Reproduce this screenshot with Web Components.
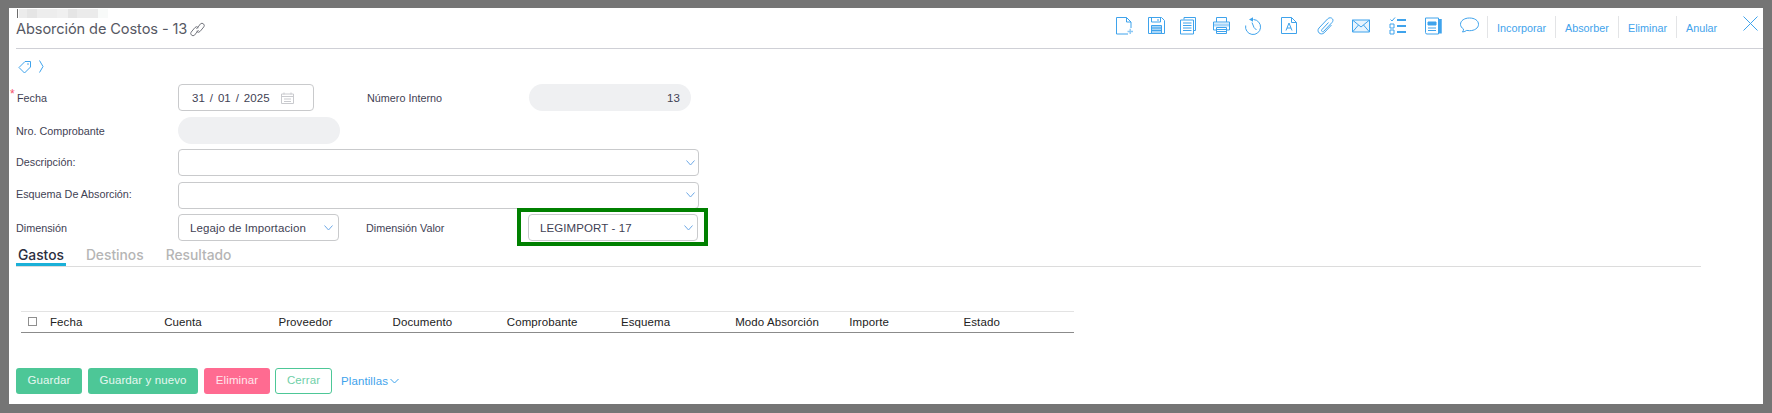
<!DOCTYPE html>
<html lang="es">
<head>
<meta charset="utf-8">
<title>Absorción de Costos</title>
<style>
  html,body{margin:0;padding:0;height:100%;background:#757575;overflow:hidden;}
  body{font-family:"Liberation Sans",Arial,sans-serif;}
</style>
</head>
<body>
<absorcion-panel>
  <panel-header slot="header"></panel-header>
  <tag-bar slot="tags"></tag-bar>
  <absorcion-form slot="form"></absorcion-form>
  <tab-bar slot="tabs"></tab-bar>
  <gastos-table slot="table"></gastos-table>
  <action-bar slot="actions"></action-bar>
</absorcion-panel>

<script>
class AbsorcionPanel extends HTMLElement{
  connectedCallback(){
    const shadowRoot = this.attachShadow({mode:'open'});
    shadowRoot.innerHTML = `
    <style>
      :host{
        display:flex;
        flex-direction:column;
        box-sizing:border-box;
        margin:8px 9px 0 9px;
        height:396px;
        background:#fff;
        padding:0 0 0 7px;
      }
    </style>
    <slot name="header"></slot>
    <slot name="tags"></slot>
    <slot name="form"></slot>
    <slot name="tabs"></slot>
    <slot name="table"></slot>
    <slot name="actions"></slot>`;
  }
}
customElements.define('absorcion-panel',AbsorcionPanel);

const ICONS = [
  {w:17,ml:0,svg:`<path d="M.5.500h10l4.500 4.500V11M12 17H.5V.500M10.500.500v4.500H15" /><path d="M11.500 14.500h5.500M14.200 11.800v5.200" stroke-width="1.400" stroke="#8cc8f5"/>`},
  {w:17,ml:15,svg:`<path d="M.5.500h13l3 3v13H.5z"/><path d="M3.500.500v4.500h9V.500M10 2v2"/><path d="M3.500 8.500h10v8h-10z" fill="#a9d6f8"/><path d="M3.500 11h10M3.500 13.500h10"/>`},
  {w:16,ml:15,svg:`<path d="M4 2.500V.5h11.500v13h-2"/><path d="M.5 3h13v14H.5z"/><path d="M3 6h8.500M3 8.500h8.500M3 11h8.500M3 13.500h8.500" stroke-width="1.200"/>`},
  {w:17,ml:17,svg:`<path d="M3.500 5V.5h10V5"/><path d="M.5 5h16v8h-3M3.500 13h-3V5"/><path d="M3.500 10.500h10v6h-10z"/><path d="M1 8h15" stroke="#a9d6f8" stroke-width="3"/><path d="M4 12.500h9M4 14.500h9"/>`},
  {w:17,ml:15,svg:`<path d="M8.500 2.500a7.500 7.500 0 1 1-7.800 6"/><path d="M8 .2v4.600L4 2.500z" fill="#3fa3ec" stroke="none"/><path d="M7 5.500l2 5 2.500 2.500"/>`},
  {w:16,ml:19,svg:`<path d="M.5.500h10l5 5v11H.5zM10.500.500v5h5"/><path d="M5 13.500L8 6l3 7.500M6 11h4"/>`},
  {w:17,ml:20,svg:`<path d="M11.500 5.500L5 12.500c-1.500 1.500 .5 3 1.800 1.700L15 5.500c3-3.500-1.800-6.500-4.500-3.500L2 11c-3 3.500 1.500 8 5.200 4.800l7.300-7.800"/>`},
  {w:18,ml:18,svg:`<path d="M.5 3h17v12H.5z" fill="#e8f4fd"/><path d="M.5 3L9 10l8.500-7M.5 15l6-7M17.500 15l-6-7"/>`},
  {w:17,ml:19,svg:`<path d="M1.500 2.500L3 4l3-3.500"/><path d="M1 7h4v4H1zM1 13h4v4H1z"/><path d="M8 3h9M8 9h9M8 15h9" stroke-width="1.800"/>`},
  {w:19,ml:19,svg:`<path d="M15 2v14.500" stroke-width="3.500"/><path d="M.5 1h13v16H2a1.500 1.500 0 0 1-1.500-1.500z"/><path d="M3 5h8v3H3z" fill="#3fa3ec"/><path d="M3 11h8M3 13.500h8"/>`},
  {w:19,ml:16,svg:`<path d="M9.500 1C4.500 1 .5 3.600.5 7.300c0 2 1.300 3.700 3 4.700.1 1.200-.4 2.300-1 3 1.700-.2 3.200-.8 4.200-1.600.9.200 1.800.300 2.800.300 5 0 9-2.600 9-6.400S14.500 1 9.500 1z"/>`}
];

class PanelHeader extends HTMLElement{
  connectedCallback(){
    const shadowRoot = this.attachShadow({mode:'open'});
    const iconos = ICONS.map(i=>
      `<svg style="margin-left:${i.ml}px" width="${i.w}" height="18" viewBox="0 0 ${i.w} 18" fill="none" stroke="#3fa3ec">${i.svg}</svg>`
    ).join('');
    shadowRoot.innerHTML = `
    <style>
      :host{
        display:flex;
        box-sizing:border-box;
        height:41px;
        border-bottom:1px solid #cfd0d6;
        position:relative;
        font-family:"Liberation Sans",Arial,sans-serif;
      }
      #blur{
        position:absolute;left:1px;top:1px;
        width:91px;height:9px;
        background:linear-gradient(90deg,#6c6c6c 0 1px,#fff 1px 2px,#ececec 2px 10px,#e5e5e5 10px 20px,#ededed 20px 40px,#f0f0f0 40px 51px,#e5e5e5 51px 60px,#ebebeb 60px 81px,#f8faf9 81px 91px);
      }
      #titulo{
        display:flex;align-items:center;gap:3px;
        margin-top:11px;height:20px;
        font:400 14.600px Inter,"Liberation Sans",sans-serif;
        letter-spacing:-.1px;
        color:#565863;
        white-space:nowrap;
      }
      #tools{
        margin-left:auto;
        display:flex;
        align-items:flex-start;
        padding-top:9px;
      }
      #tools svg{display:block;}
      .sep{
        width:1px;height:22px;background:#e3e4e6;margin-top:-1px;
      }
      .txt{
        font-size:10.800px;line-height:14px;color:#3fa3ec;
        margin:4px 0 0 9px;
      }
      #cerrar{margin:-1px 5px 0 0;display:block;}
    </style>
    <div id="blur"></div>
    <div id="titulo">Absorción de Costos - 13
      <svg width="15" height="15" viewBox="0 0 15 15" fill="none" stroke="#75777f" stroke-width="1"><path d="M6.500 7L10.500 1.800a2.300 2.300 0 0 1 3.400 3L10 9.500a2.300 2.300 0 0 1-3.400-.2"/><path d="M8.500 8L4.500 13.200a2.300 2.300 0 0 1-3.400-3L5 5.500a2.300 2.300 0 0 1 3.400 .2"/></svg>
    </div>
    <div id="tools">
      ${iconos}
      <div class="sep" style="margin-left:8px"></div>
      <div class="txt" style="width:58px">Incorporar</div>
      <div class="sep"></div>
      <div class="txt" style="width:53px">Absorber</div>
      <div class="sep"></div>
      <div class="txt" style="width:48px">Eliminar</div>
      <div class="sep"></div>
      <div class="txt" style="width:57px">Anular</div>
      <svg id="cerrar" width="15" height="15" viewBox="0 0 15 15" fill="none" stroke="#3fa3ec" stroke-width="1"><path d="M.5.500l14 14M14.500.500l-14 14"/></svg>
    </div>`;
  }
}
customElements.define('panel-header',PanelHeader);

class TagBar extends HTMLElement{
  connectedCallback(){
    const shadowRoot = this.attachShadow({mode:'open'});
    shadowRoot.innerHTML = `
    <style>
      :host{
        display:flex;
        align-items:center;
        gap:7px;
        height:35px;
        padding:0 0 0 2px;
      }
      svg{display:block;}
    </style>
    <svg width="14" height="14" viewBox="0 0 14 14" fill="none" stroke="#3fa3ec"><path d="M1 7.500L7 1.500h5.500V7L6.500 13z"/><circle cx="10" cy="4" r=".8" fill="#3fa3ec" stroke="none"/></svg>
    <svg width="5" height="13" viewBox="0 0 5 13" fill="none" stroke="#3fa3ec"><path d="M.5.500L4 6.500.5 12.500"/></svg>`;
  }
}
customElements.define('tag-bar',TagBar);

class FormControl extends HTMLElement{
  connectedCallback(){
    const shadowRoot = this.attachShadow({mode:'open'});
    const flecha = this.hasAttribute('arrow')
      ? `<svg id="arrow" width="9" height="6" viewBox="0 0 9 6" fill="none" stroke="#6fa9e6"><path d="M.5.500L4.500 5 8.500.500"/></svg>` : '';
    shadowRoot.innerHTML = `
    <style>
      :host{
        display:flex;
        align-items:center;
        box-sizing:border-box;
        height:27px;
        border:1px solid #c9cacc;
        border-radius:4px;
        background:#fff;
        padding:0 3px 0 11px;
        font:11.500px "Liberation Sans",Arial,sans-serif;
        letter-spacing:.1px;
        color:#3f4254;
        position:relative;
      }
      :host([readonly]){
        border:0;
        border-radius:14px;
        background:#eff0f2;
        justify-content:flex-end;
        padding:0 11px;
      }
      :host([marked]){
        margin:0 1px 0 -1px;
        padding-right:4px;
      }
      :host([marked])::after{
        content:"";
        position:absolute;
        left:-12px;right:-11px;top:-7px;bottom:-6px;
        border:4px solid #008000;
      }
      #arrow{margin-left:auto;}
    </style>
    <slot></slot>${flecha}`;
  }
}
customElements.define('form-control',FormControl);

class FormLabel extends HTMLElement{
  connectedCallback(){
    const shadowRoot = this.attachShadow({mode:'open'});
    shadowRoot.innerHTML = `
    <style>
      :host{
        display:flex;
        align-items:center;
        box-sizing:border-box;
        height:27px;
        font:10.800px "Liberation Sans",Arial,sans-serif;
        color:#3f4254;
        position:relative;
      }
      :host([required])::before{
        content:"*";
        position:absolute;
        left:-6px;top:3px;
        color:#f4516c;
        font-size:12px;
      }
    </style>
    <slot></slot>`;
  }
}
customElements.define('form-label',FormLabel);

class AbsorcionForm extends HTMLElement{
  connectedCallback(){
    const shadowRoot = this.attachShadow({mode:'open'});
    shadowRoot.innerHTML = `
    <style>
      :host{
        display:grid;
        grid-template-columns:162px 189px 162px 170px;
        grid-auto-rows:27px;
        row-gap:5.500px;
        width:683px;
      }
      .fecha{width:136px;padding-left:13px;}
      .fecha span{word-spacing:1.500px;}
      .corto{width:162px;}
      .ancho{grid-column:2 / 5;}
      svg{margin-left:11px;display:block;}
      .dim{width:161px;padding-right:5px;}
      .resto{grid-column:3 / 5;}
      .sube{padding-bottom:2px;}
      .baja{padding-top:2px;}
    </style>
    <form-label required style="padding-left:1px">Fecha</form-label>
    <form-control class="fecha"><span>31 / 01 / 2025</span>
      <svg width="13" height="12" viewBox="0 0 13 12" fill="none" stroke="#c9cace"><path d="M.5 2h12v9.500H.5zM3 .500v2M10 .500v2M.5 4.500h12M3 7h7M3 9.500h7"/></svg>
    </form-control>
    <form-label>Número Interno</form-label>
    <form-control class="corto" readonly>13</form-control>

    <form-label class="baja">Nro. Comprobante</form-label>
    <form-control class="corto" readonly></form-control>
    <div class="resto"></div>

    <form-label class="sube">Descripción:</form-label>
    <form-control class="ancho" arrow></form-control>

    <form-label class="sube">Esquema De Absorción:</form-label>
    <form-control class="ancho" arrow></form-control>

    <form-label>Dimensión</form-label>
    <form-control class="dim" arrow>Legajo de Importacion</form-control>
    <form-label style="margin-left:-1px">Dimensión Valor</form-label>
    <form-control marked arrow>LEGIMPORT - 17</form-control>`;
  }
}
customElements.define('absorcion-form',AbsorcionForm);

class TabBar extends HTMLElement{
  connectedCallback(){
    const shadowRoot = this.attachShadow({mode:'open'});
    shadowRoot.innerHTML = `
    <style>
      :host{
        display:flex;
        box-sizing:border-box;
        width:1685px;
        height:26px;
        border-bottom:1px solid #dcdcdc;
        gap:18px;
        font:500 13.800px Inter,"Liberation Sans",sans-serif;
        color:#b5b5b5;
      }
      div{padding:5px 2px 0;height:20px;line-height:19px;}
      .on{color:#2c2e3e;border-bottom:3px solid #1ab0d8;height:17px;}
    </style>
    <div class="on">Gastos</div>
    <div>Destinos</div>
    <div>Resultado</div>`;
  }
}
customElements.define('tab-bar',TabBar);

class GastosTable extends HTMLElement{
  connectedCallback(){
    const shadowRoot = this.attachShadow({mode:'open'});
    const columnas = ['Fecha','Cuenta','Proveedor','Documento','Comprobante','Esquema','Modo Absorción','Importe','Estado'];
    shadowRoot.innerHTML = `
    <style>
      :host{
        display:grid;
        grid-template-columns:29px repeat(9,114.200px);
        align-items:center;
        box-sizing:border-box;
        width:1053px;
        height:22px;
        margin:44px 0 0 5px;
        padding-bottom:1px;
        border-top:1px solid #e3e3e3;
        border-bottom:1px solid #8b8b8b;
        font:11.500px "Liberation Sans",Arial,sans-serif;
        color:#222;
        letter-spacing:.1px;
      }
      i{
        display:block;box-sizing:border-box;
        width:9px;height:9px;margin-left:7px;
        border:1px solid #8f8f8f;background:#fff;
      }
    </style>
    <i></i>${columnas.map(c=>`<div>${c}</div>`).join('')}`;
  }
}
customElements.define('gastos-table',GastosTable);

class ActionBar extends HTMLElement{
  connectedCallback(){
    const shadowRoot = this.attachShadow({mode:'open'});
    shadowRoot.innerHTML = `
    <style>
      :host{
        display:flex;
        align-items:center;
        height:26px;
        margin-top:35px;
        font:11.500px "Liberation Sans",Arial,sans-serif;
        letter-spacing:.1px;
      }
      button{
        box-sizing:border-box;
        height:26px;
        border:0;
        border-radius:3px;
        padding:0 0 2px;
        font:inherit;
        letter-spacing:inherit;
        color:#e6f7f0;
        background:#4dc797;
        margin-right:6px;
      }
      .del{background:#ff6b91;color:#ffe6ec;}
      .out{background:#fff;color:#6fcfa8;border:1px solid #4dc797;}
      a{color:#3fa3ec;display:flex;align-items:center;gap:2px;margin:-1px 0 0 3px;}
    </style>
    <button style="width:66px">Guardar</button>
    <button style="width:110px">Guardar y nuevo</button>
    <button class="del" style="width:66px;margin-right:5px">Eliminar</button>
    <button class="out" style="width:57px">Cerrar</button>
    <a>Plantillas
      <svg width="9" height="6" viewBox="0 0 9 6" fill="none" stroke="#3fa3ec"><path d="M.5 1L4.500 5 8.500 1"/></svg>
    </a>`;
  }
}
customElements.define('action-bar',ActionBar);
</script>
</body>
</html>
